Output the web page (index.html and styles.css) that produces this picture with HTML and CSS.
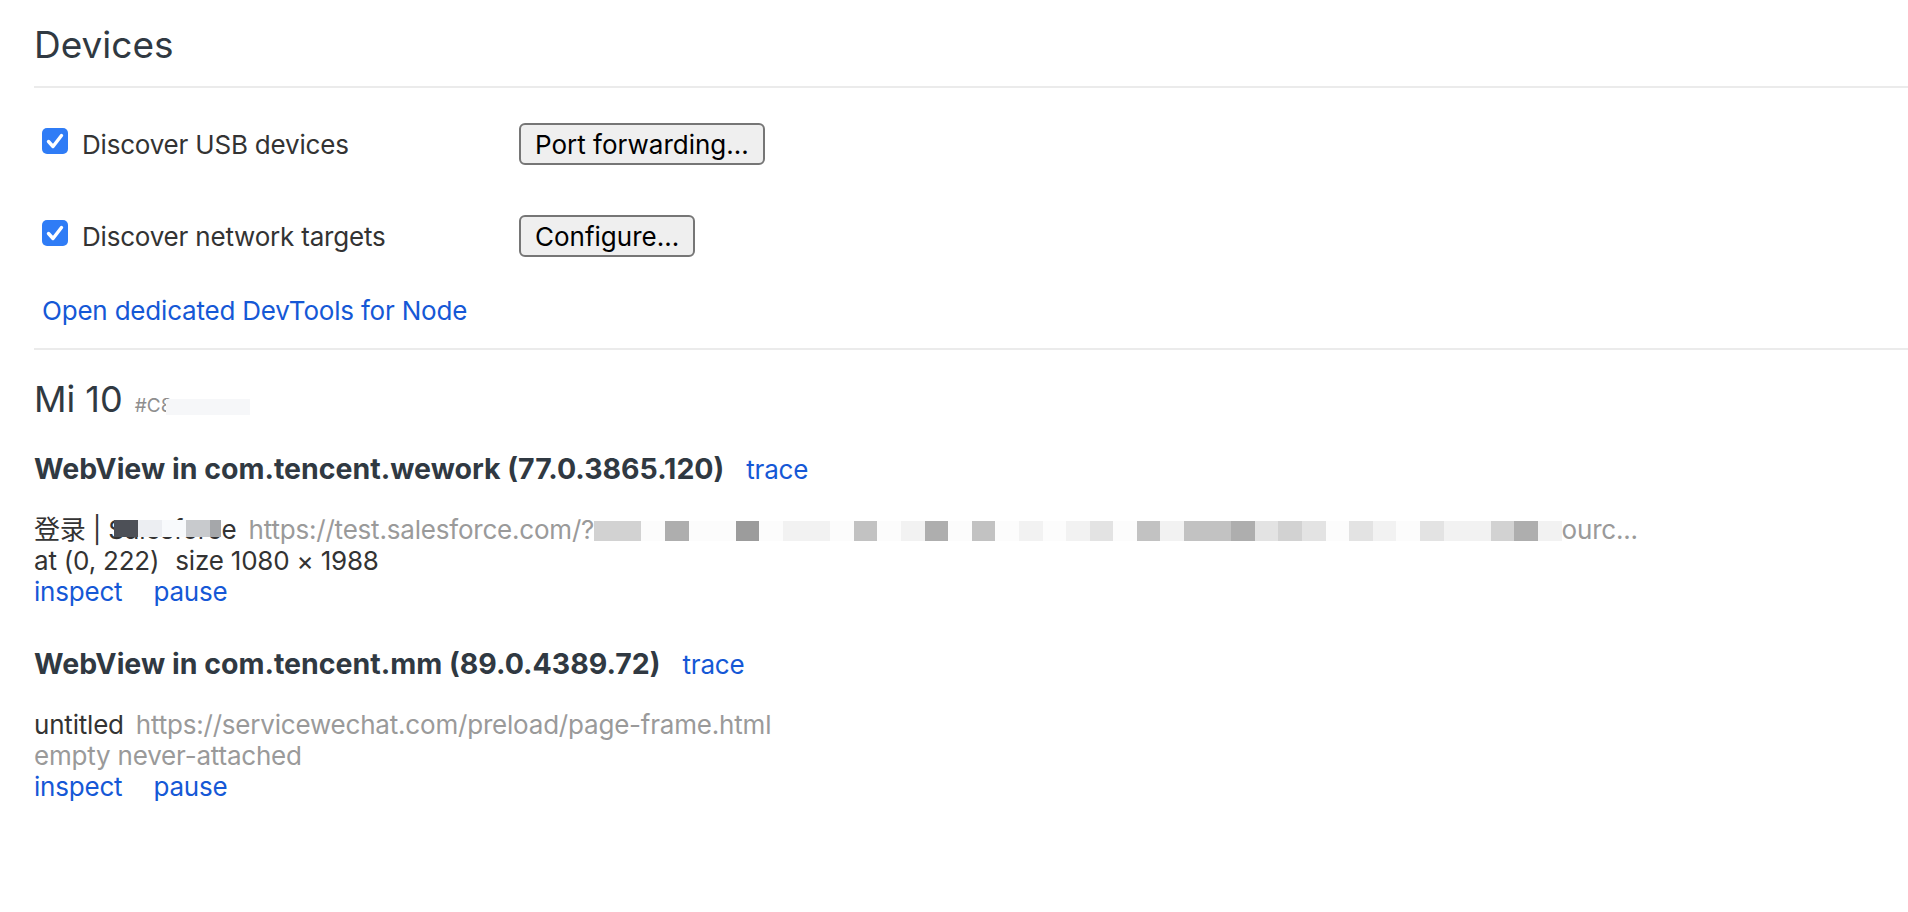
FILE: index.html
```html
<!DOCTYPE html>
<html lang="en">
<head>
    <meta charset="UTF-8">
    <title>Inspect with Chrome Developer Tools</title>
    <link rel="stylesheet" href="styles.css">
</head>
<body>
    <div class="page">
        <h1 class="title">Devices</h1>

        <div class="settings">
            <div class="option-row">
                <label class="option">
                    <span class="checkbox">
                        <svg width="26" height="26" viewBox="0 0 26 26"><rect width="26" height="26" rx="5" fill="#2f7cf6"/><path d="M6.5 13.5 L11 18.5 L19.5 7.5" fill="none" stroke="#fff" stroke-width="3.4" stroke-linecap="round" stroke-linejoin="round"/></svg>
                    </span>
                    Discover USB devices
                </label>
                <button class="btn">Port forwarding...</button>
            </div>
            <div class="option-row">
                <label class="option">
                    <span class="checkbox">
                        <svg width="26" height="26" viewBox="0 0 26 26"><rect width="26" height="26" rx="5" fill="#2f7cf6"/><path d="M6.5 13.5 L11 18.5 L19.5 7.5" fill="none" stroke="#fff" stroke-width="3.4" stroke-linecap="round" stroke-linejoin="round"/></svg>
                    </span>
                    Discover network targets
                </label>
                <button class="btn">Configure...</button>
            </div>
            <a href="#" class="node-link">Open dedicated DevTools for Node</a>
        </div>

        <section class="device">
            <h2 class="device-name">Mi 10<span class="serial">#C8<span class="serial-mask"></span></span></h2>

            <div class="browser">
                <div class="browser-title"><span class="browser-name">WebView in com.tencent.wework (77.0.3865.120)</span><a href="#" class="trace">trace</a></div>
                <div class="target">
                    <div class="target-line">
                        <span class="target-name">登录 | <span class="masked">Salesforce<span class="mask"><i class="m d1"></i><i class="m l1"></i><i class="m l0"></i><i class="m d3"></i><i class="m d2 half"></i></span></span></span><span class="target-url">https://test.salesforce.com/?<span class="mosaic"><i class="m s3"></i><i class="m s3"></i><i class="m s0"></i><i class="m s5"></i><i class="m s0"></i><i class="m s0"></i><i class="m s6"></i><i class="m s0"></i><i class="m s1"></i><i class="m s1"></i><i class="m s0"></i><i class="m s4"></i><i class="m s0"></i><i class="m s1"></i><i class="m s5"></i><i class="m s0"></i><i class="m s4"></i><i class="m s0"></i><i class="m s1"></i><i class="m s0"></i><i class="m s1"></i><i class="m s2"></i><i class="m s0"></i><i class="m s4"></i><i class="m s1"></i><i class="m s4"></i><i class="m s4"></i><i class="m s5"></i><i class="m s2"></i><i class="m s3"></i><i class="m s2"></i><i class="m s0"></i><i class="m s2"></i><i class="m s1"></i><i class="m s0"></i><i class="m s2"></i><i class="m s1"></i><i class="m s1"></i><i class="m s3"></i><i class="m s5"></i><i class="m s1"></i></span>ourc...</span>
                    </div>
                    <div class="target-line">at (0, 222)<span class="size">size 1080 × 1988</span></div>
                    <div class="actions">
                        <a href="#" class="action">inspect</a>
                        <a href="#" class="action">pause</a>
                    </div>
                </div>
            </div>

            <div class="browser">
                <div class="browser-title"><span class="browser-name">WebView in com.tencent.mm (89.0.4389.72)</span><a href="#" class="trace">trace</a></div>
                <div class="target">
                    <div class="target-line">
                        <span class="target-name">untitled</span><span class="target-url">https://servicewechat.com/preload/page-frame.html</span>
                    </div>
                    <div class="target-line muted">empty never-attached</div>
                    <div class="actions">
                        <a href="#" class="action">inspect</a>
                        <a href="#" class="action">pause</a>
                    </div>
                </div>
            </div>
        </section>
    </div>
</body>
</html>
```

FILE: styles.css
```css
:root {
    --text-color: #303942;
    --link-color: #1558d6;
    --muted-color: #9a9a9a;
    --line-color: #ebebeb;
}

body {
    margin: 0;
    background: #fff;
    color: var(--text-color);
    font-family: Inter, "Noto Sans CJK SC", sans-serif;
    letter-spacing: -0.2px;
}

a {
    color: var(--link-color);
    text-decoration: none;
}

.page {
    padding: 22px 0 0 34px;
}

.title {
    margin: 0;
    padding-bottom: 18px;
    border-bottom: 2px solid var(--line-color);
    font-size: 37px;
    line-height: 46px;
    font-weight: 400;
    letter-spacing: 0;
}

.settings {
    padding: 35px 0 22px;
    border-bottom: 2px solid var(--line-color);
}

.option-row {
    display: flex;
    align-items: center;
    height: 42px;
}

.option-row + .option-row {
    margin-top: 50px;
}

.option {
    display: flex;
    align-items: center;
    width: 485px;
    font-size: 26px;
    line-height: 31px;
    color: #333;
}

.checkbox {
    display: flex;
    width: 26px;
    height: 26px;
    margin: 0 14px 6px 8px;
}

.btn {
    height: 42px;
    padding: 0 14px;
    background: #efefef;
    border: 2px solid #767676;
    border-radius: 6px;
    color: #000;
    font-family: Inter, sans-serif;
    font-size: 26px;
    letter-spacing: 0;
}

.node-link {
    display: block;
    margin: 38px 0 0 8px;
    font-size: 26px;
    line-height: 31px;
}

.device-name {
    margin: 27px 0 0;
    font-size: 36px;
    line-height: 44px;
    font-weight: 400;
    letter-spacing: 0;
}

.serial {
    margin-left: 12px;
    font-size: 19px;
    color: #8e8e8e;
}

.serial-mask {
    display: inline-block;
    width: 84px;
    height: 16px;
    margin-left: -6px;
    vertical-align: -3px;
    background: #f6f7f9;
}

.browser {
    font-size: 26px;
    line-height: 31px;
}

.browser-title {
    margin-top: 25px;
}

.browser + .browser .browser-title {
    margin-top: 41px;
}

.browser-name {
    font-size: 28.5px;
    font-weight: 700;
    letter-spacing: 0;
}

.trace {
    margin-left: 22px;
}

.target {
    margin-top: 29px;
    color: #333;
}

.target-url {
    margin-left: 12px;
    color: var(--muted-color);
}

.masked {
    position: relative;
}

.mask {
    position: absolute;
    left: 6px;
    top: 6px;
    display: flex;
    height: 17px;
}

.mosaic {
    display: inline-flex;
    height: 20px;
    vertical-align: -2px;
}

.m {
    display: block;
    width: 23.6px;
    height: 100%;
}

.mask .m {
    width: 24px;
}

.mask .half {
    width: 11px;
}

.d1 { background: #4d5057; }
.d2 { background: #a5a7aa; }
.d3 { background: #c8cacd; }
.l1 { background: #eceef2; }
.l0 { background: #f8fafc; }

.s0 { background: #fcfcfc; }
.s1 { background: #f2f2f2; }
.s2 { background: #e3e3e3; }
.s3 { background: #d2d2d2; }
.s4 { background: #c2c2c2; }
.s5 { background: #aeaeae; }
.s6 { background: #9c9c9c; }

.size {
    margin-left: 16px;
}

.muted {
    color: var(--muted-color);
}

.actions {
    display: flex;
    gap: 31px;
}
```
